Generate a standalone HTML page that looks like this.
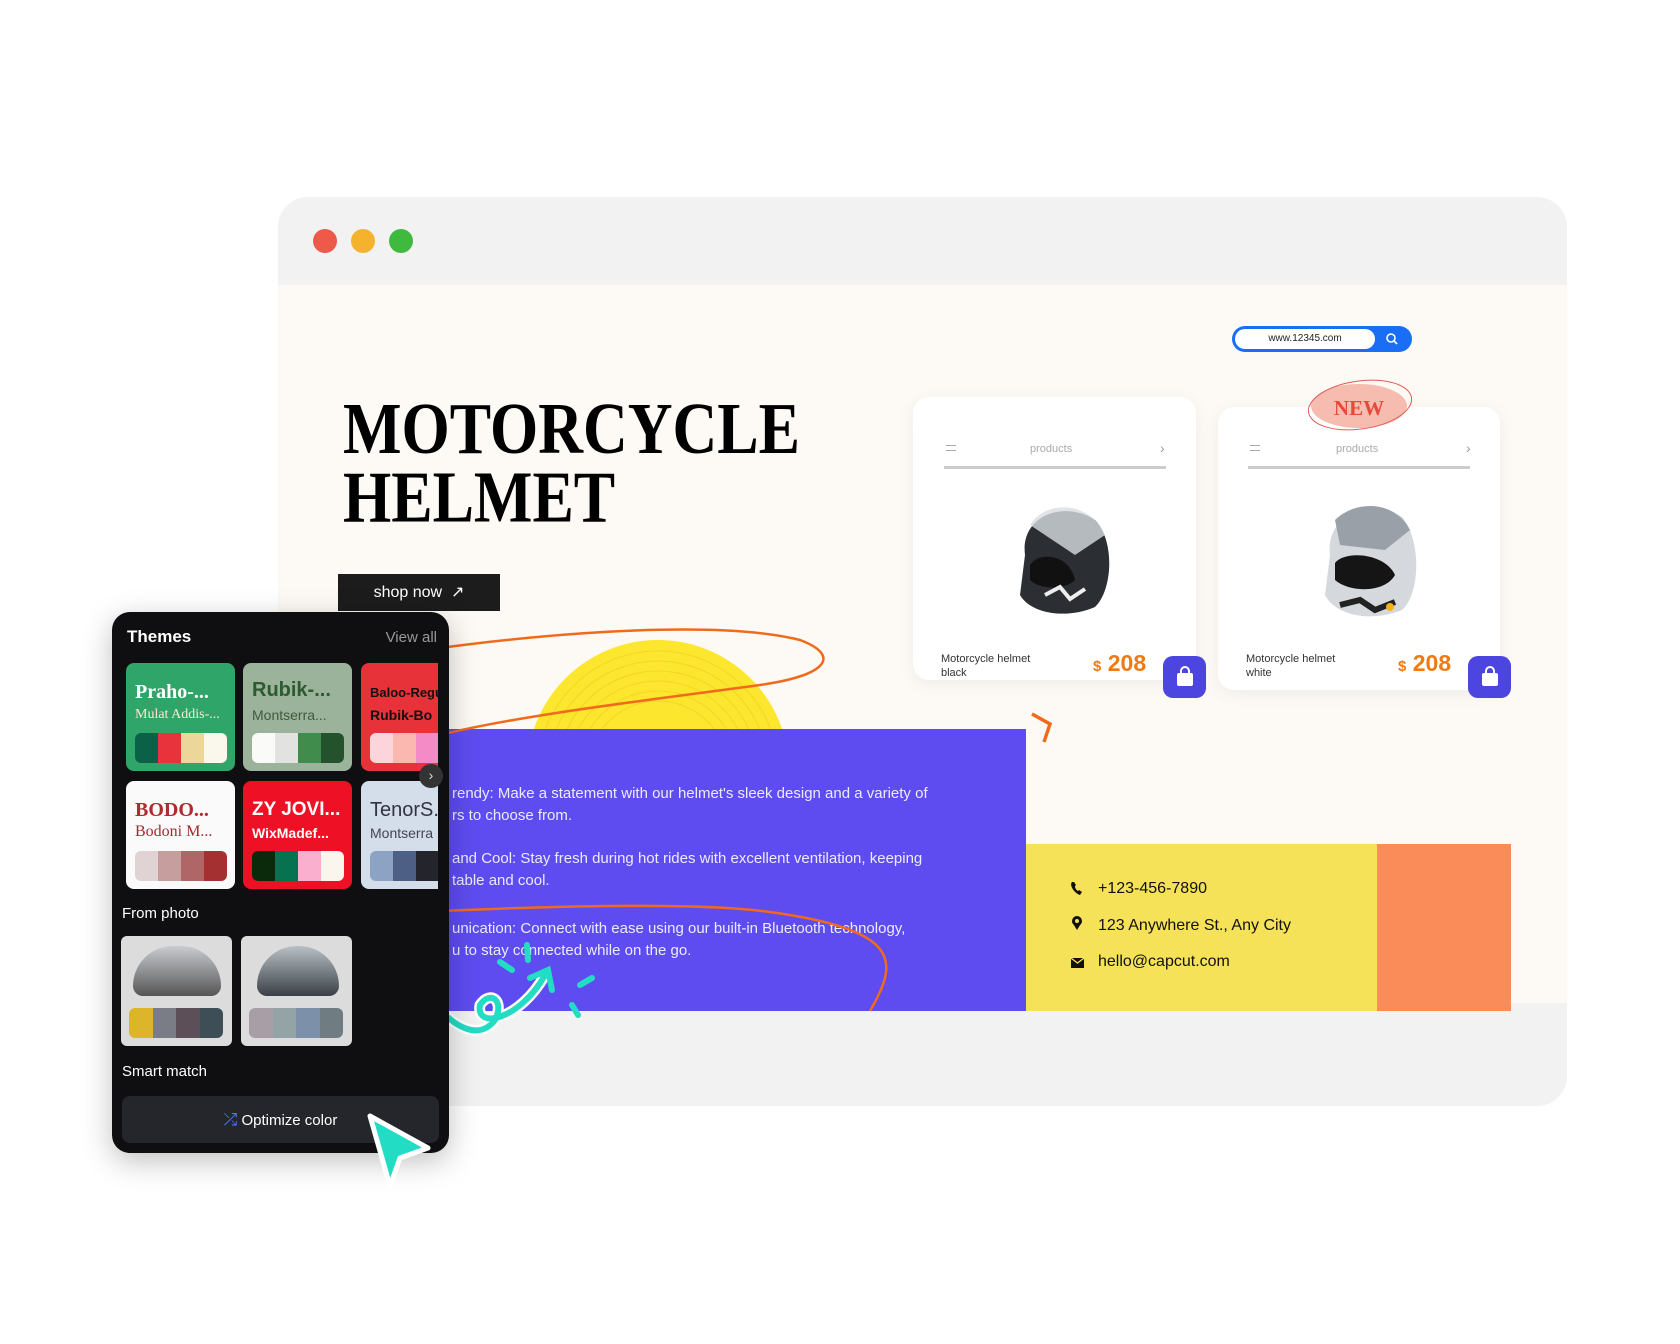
<!DOCTYPE html>
<html><head><meta charset="utf-8"><style>
*{margin:0;padding:0;box-sizing:border-box}
body{width:1680px;height:1344px;background:#fff;position:relative;overflow:hidden;font-family:"Liberation Sans",sans-serif}
.a{position:absolute}
.win{left:278px;top:197px;width:1289px;height:909px;background:#f2f2f2;border-radius:30px;overflow:hidden}
.dot{width:24px;height:24px;border-radius:50%;top:229px}
.card{background:#fff;border-radius:16px;box-shadow:0 4px 18px rgba(0,0,0,.06)}
.ptxt{font-size:11px;color:#333;line-height:14px}
.price{color:#f07a12;font-weight:bold;font-size:23px}
.bag{width:43px;height:42px;border-radius:10px;background:#4c45e0}
.ptext{color:#ecebff;font-size:15px;line-height:22px;left:452px;white-space:nowrap}
.ct{font-size:16px;color:#111;left:1098px}
.tile{width:109px;height:108px;border-radius:8px;overflow:hidden}
.sw{position:absolute;left:9px;top:70px;width:92px;height:30px;border-radius:6px;overflow:hidden;display:flex}
.sw i{flex:1}
.t1{position:absolute;left:9px;top:18px;font-weight:bold;font-size:20px;white-space:nowrap}
.t2{position:absolute;left:9px;top:44px;font-size:14px;white-space:nowrap}
</style></head><body>
<div class="a win"></div>
<div class="a" style="left:278px;top:285px;width:1289px;height:718px;background:#fdfaf5"></div>
<div class="a dot" style="left:313px;background:#ee5a4a"></div>
<div class="a dot" style="left:351px;background:#f5b32d"></div>
<div class="a dot" style="left:389px;background:#3fba3f"></div>

<div class="a" style="left:343px;top:395px;font-family:'Liberation Serif',serif;font-weight:bold;font-size:62px;line-height:58px;color:#000;transform:scaleY(1.18);transform-origin:0 0">MOTORCYCLE<br>HELMET</div>
<div class="a" style="left:338px;top:574px;width:162px;height:37px;background:#1c1c1c;color:#fff;font-size:16px;line-height:37px;text-align:center">shop now&nbsp;&nbsp;↗</div>

<!-- search -->
<div class="a" style="left:1232px;top:326px;width:180px;height:26px;border-radius:13px;background:#1a6ef5"></div>
<div class="a" style="left:1235px;top:329px;width:140px;height:20px;border-radius:10px;background:#fff;font-size:10px;line-height:20px;text-align:center;color:#222">www.12345.com</div>
<svg class="a" style="left:1385px;top:332px" width="14" height="14"><circle cx="6" cy="6" r="4" stroke="#fff" stroke-width="1.6" fill="none"/><path d="M9 9l3 3" stroke="#fff" stroke-width="1.6"/></svg>

<!-- yellow sun -->
<svg class="a" style="left:520px;top:630px" width="280" height="100"><defs><clipPath id="c"><rect width="280" height="99"/></clipPath></defs><g clip-path="url(#c)"><circle cx="138" cy="141" r="131" fill="#fde62e"/><g fill="none" stroke="#f4d42a" stroke-width="1"><circle cx="138" cy="141" r="120"/><circle cx="138" cy="141" r="110"/><circle cx="138" cy="141" r="100"/><circle cx="138" cy="141" r="90"/><circle cx="138" cy="141" r="80"/><circle cx="138" cy="141" r="70"/></g></g></svg>

<!-- cards -->
<div class="a card" style="left:913px;top:397px;width:283px;height:283px"></div>
<div class="a card" style="left:1218px;top:407px;width:282px;height:283px"></div>
<div class="a" style="left:944px;top:466px;width:222px;height:3px;background:#ccc"></div>
<div class="a" style="left:1248px;top:466px;width:222px;height:3px;background:#ccc"></div>
<div class="a" style="left:1030px;top:443px;font-size:11px;color:#aaa">products</div>
<div class="a" style="left:1336px;top:443px;font-size:11px;color:#aaa">products</div>
<div class="a" style="left:1160px;top:440px;font-size:14px;color:#999">›</div>
<div class="a" style="left:1466px;top:440px;font-size:14px;color:#999">›</div>
<div class="a" style="left:946px;top:445px;width:10px;border-top:1.5px solid #aaa;height:6px;border-bottom:1.5px solid #aaa"></div>
<div class="a" style="left:1250px;top:445px;width:10px;border-top:1.5px solid #aaa;height:6px;border-bottom:1.5px solid #aaa"></div>
<svg class="a" style="left:1005px;top:495px" width="110" height="125"><path d="M20 60 C15 20 60 5 90 25 C110 45 108 95 90 112 C60 125 25 118 15 100 Z" fill="#2b2e33"/><path d="M25 30 C40 5 85 5 100 40 L70 60 Z" fill="#d8dde2" opacity=".8"/><path d="M25 70 C35 55 65 60 70 85 C60 95 35 95 25 85Z" fill="#111"/><path d="M40 100 l15 -8 l10 12 l15-10" stroke="#eee" stroke-width="4" fill="none"/></svg>
<svg class="a" style="left:1310px;top:495px" width="115" height="130"><path d="M20 60 C15 20 60 3 92 22 C112 45 110 100 92 115 C60 128 25 120 15 100 Z" fill="#d5d8dc"/><path d="M25 25 C45 5 85 5 100 35 L75 55 L30 50Z" fill="#9aa0a8"/><path d="M25 68 C35 55 75 58 85 80 C75 98 40 98 25 85Z" fill="#151515"/><path d="M30 110 l20 -5 l15 10 l20-8" stroke="#222" stroke-width="6" fill="none"/><circle cx="80" cy="112" r="4" fill="#f2b31a"/></svg>
<div class="a ptxt" style="left:941px;top:652px">Motorcycle helmet<br>black</div>
<div class="a ptxt" style="left:1246px;top:652px">Motorcycle helmet<br>white</div>
<div class="a price" style="left:1093px;top:650px"><span style="font-size:15px">$</span> 208</div>
<div class="a price" style="left:1398px;top:650px"><span style="font-size:15px">$</span> 208</div>
<div class="a bag" style="left:1163px;top:656px"></div>
<div class="a bag" style="left:1468px;top:656px"></div>
<svg class="a" style="left:1175px;top:666px" width="20" height="22"><path d="M6 7V5a4 4 0 0 1 8 0v2" stroke="#fff" stroke-width="2" fill="none"/><rect x="2" y="7" width="16" height="13" rx="2" fill="#fff"/></svg>
<svg class="a" style="left:1480px;top:666px" width="20" height="22"><path d="M6 7V5a4 4 0 0 1 8 0v2" stroke="#fff" stroke-width="2" fill="none"/><rect x="2" y="7" width="16" height="13" rx="2" fill="#fff"/></svg>
<svg class="a" style="left:1300px;top:375px" width="120" height="60"><ellipse cx="59" cy="31" rx="48" ry="22" fill="#f6bcb0"/><ellipse cx="60" cy="30" rx="52" ry="24" fill="none" stroke="#e45a56" stroke-width="1" transform="rotate(-8 60 30)"/><text x="59" y="40" text-anchor="middle" font-family="Liberation Serif" font-weight="bold" font-size="21" fill="#e8483a">NEW</text></svg>

<!-- blocks -->
<div class="a" style="left:420px;top:729px;width:606px;height:282px;background:#5e4cf0"></div>
<div class="a" style="left:1026px;top:844px;width:351px;height:167px;background:#f5e258"></div>
<div class="a" style="left:1377px;top:844px;width:134px;height:167px;background:#fa8c59"></div>
<div class="a ptext" style="top:783px">rendy: Make a statement with our helmet's sleek design and a variety of<br>rs to choose from.</div>
<div class="a ptext" style="top:848px">and Cool: Stay fresh during hot rides with excellent ventilation, keeping<br>table and cool.</div>
<div class="a ptext" style="top:918px">unication: Connect with ease using our built-in Bluetooth technology,<br>u to stay connected while on the go.</div>
<div class="a ct" style="top:880px">+123-456-7890</div>
<div class="a ct" style="top:917px">123 Anywhere St., Any City</div>
<div class="a ct" style="top:953px">hello@capcut.com</div>
<svg class="a" style="left:1068px;top:880px" width="20" height="95"><path d="M4 2c-3 3 2 11 8 13l2-3-3-2-1 1c-2-1-3-3-3-5l1-1-2-3z" fill="#111"/><path d="M9 50l-5-8h10z" fill="#111"/><circle cx="9" cy="41" r="5" fill="#111"/><circle cx="9" cy="41" r="2" fill="#f5e258"/><rect x="3" y="78" width="13" height="10" fill="#111"/><path d="M3 78l6.5 5 6.5-5" stroke="#f5e258" stroke-width="1.3" fill="none"/></svg>

<!-- orange lines -->
<svg class="a" style="left:0;top:0" width="1680" height="1344"><g fill="none" stroke="#f06a1c" stroke-width="2.5"><path d="M440 648 C560 632 720 620 800 640 C840 655 830 675 760 685 C650 700 520 715 440 735"/><path d="M440 911 C560 906 700 902 770 912 C900 930 900 960 870 1011"/><path d="M1032 714 L1050 724 L1044 742" stroke-width="3.5"/></g>
<g fill="none" stroke="#fff" stroke-width="11" stroke-linecap="round"><path d="M432 1000 C455 1030 480 1040 495 1020 C505 1000 490 990 480 1005 C475 1030 520 1020 545 975"/></g>
<g fill="none" stroke="#22dcc4" stroke-width="6" stroke-linecap="round"><path d="M432 1000 C455 1030 480 1040 495 1020 C505 1000 490 990 480 1005 C475 1030 520 1020 545 975"/><path d="M530 978 L548 970 L552 990"/><path d="M527 945 L528 960"/><path d="M500 962 L512 970"/><path d="M580 985 L592 978"/><path d="M572 1005 L578 1015"/></g></svg>

<!-- panel -->
<div class="a" style="left:112px;top:612px;width:337px;height:541px;background:#0f0f11;border-radius:18px;box-shadow:0 8px 30px rgba(0,0,0,.25);overflow:hidden">
<div class="a" style="left:15px;top:15px;color:#fff;font-weight:bold;font-size:17px">Themes</div>
<div class="a" style="right:12px;top:17px;color:#999;font-size:15px">View all</div>
<div class="a" style="left:14px;top:51px;width:312px;height:226px;overflow:hidden">
<div class="a tile" style="left:0;top:0;background:#2fa56a"><div class="t1" style="color:#fff;font-family:'Liberation Serif',serif">Praho-...</div><div class="t2" style="color:#f4edd0;font-family:'Liberation Serif',serif">Mulat Addis-...</div><div class="sw"><i style="background:#0b6148"></i><i style="background:#e8323c"></i><i style="background:#edd699"></i><i style="background:#faf8ec"></i></div></div>
<div class="a tile" style="left:117px;top:0;background:#9bb39a"><div class="t1" style="color:#2d5a2f;top:16px">Rubik-...</div><div class="t2" style="color:#3f5a3f">Montserra...</div><div class="sw"><i style="background:#fafaf8"></i><i style="background:#e2e2e0"></i><i style="background:#3f8c4c"></i><i style="background:#24522c"></i></div></div>
<div class="a tile" style="left:235px;top:0;background:#e8323a"><div class="t1" style="color:#111;font-size:13px;top:22px">Baloo-Regu</div><div class="t2" style="color:#111;font-weight:bold;top:44px">Rubik-Bo</div><div class="sw"><i style="background:#fcd5dc"></i><i style="background:#fbb8b0"></i><i style="background:#f48ac6"></i><i style="background:#f48ac6"></i></div></div>
<div class="a tile" style="left:0;top:118px;background:#fbfafa"><div class="t1" style="color:#b02a2e;font-family:'Liberation Serif',serif">BODO...</div><div class="t2" style="color:#a02a2e;font-family:'Liberation Serif',serif;font-size:16px;top:42px">Bodoni M...</div><div class="sw"><i style="background:#e0d3d3"></i><i style="background:#c69e9e"></i><i style="background:#b06666"></i><i style="background:#a53032"></i></div></div>
<div class="a tile" style="left:117px;top:118px;background:#ee1024"><div class="t1" style="color:#fff;font-size:19px">ZY JOVI...</div><div class="t2" style="color:#fff;font-weight:bold">WixMadef...</div><div class="sw"><i style="background:#0b2a0c"></i><i style="background:#06724f"></i><i style="background:#fbafcf"></i><i style="background:#faf6ed"></i></div></div>
<div class="a tile" style="left:235px;top:118px;background:#d3deea"><div class="t1" style="color:#334;font-weight:normal;font-size:20px">TenorS.</div><div class="t2" style="color:#445">Montserra</div><div class="sw"><i style="background:#8da3c4"></i><i style="background:#4e5f86"></i><i style="background:#23242c"></i><i style="background:#23242c"></i></div></div>
</div>
<div class="a" style="left:307px;top:152px;width:24px;height:24px;border-radius:50%;background:#333;color:#ddd;font-size:14px;text-align:center;line-height:23px">›</div>
<div class="a" style="left:10px;top:293px;color:#fff;font-size:15px">From photo</div>
<div class="a" style="left:9px;top:324px;width:111px;height:110px;border-radius:6px;background:#dcdcdc;overflow:hidden"><div class="a" style="left:12px;top:10px;width:88px;height:50px;border-radius:40px 40px 10px 10px;background:linear-gradient(#c9ccd0,#555)"></div><div class="sw" style="left:8px;top:72px;width:94px;height:30px"><i style="background:#dcb52a"></i><i style="background:#7a7d85"></i><i style="background:#5d4f58"></i><i style="background:#3d4e57"></i></div></div>
<div class="a" style="left:129px;top:324px;width:111px;height:110px;border-radius:6px;background:#dcdcdc;overflow:hidden"><div class="a" style="left:16px;top:10px;width:82px;height:50px;border-radius:40px 40px 10px 10px;background:linear-gradient(#b8c0c6,#3a4046)"></div><div class="sw" style="left:8px;top:72px;width:94px;height:30px"><i style="background:#a89ea6"></i><i style="background:#94a3a6"></i><i style="background:#7d90aa"></i><i style="background:#6f7d82"></i></div></div>
<div class="a" style="left:10px;top:451px;color:#fff;font-size:15px">Smart match</div>
<div class="a" style="left:10px;top:484px;width:317px;height:47px;border-radius:8px;background:#25262b;color:#fff;font-size:15px;line-height:47px;text-align:center"><span style="color:#4a7cf5;font-size:17px">⤮</span> Optimize color</div>
</div>

<!-- cursor -->
<svg class="a" style="left:360px;top:1108px" width="80" height="85"><path d="M10 8 L68 40 L40 50 L30 78 Z" fill="#22dcc4" stroke="#fff" stroke-width="5" stroke-linejoin="round"/></svg>
</body></html>
